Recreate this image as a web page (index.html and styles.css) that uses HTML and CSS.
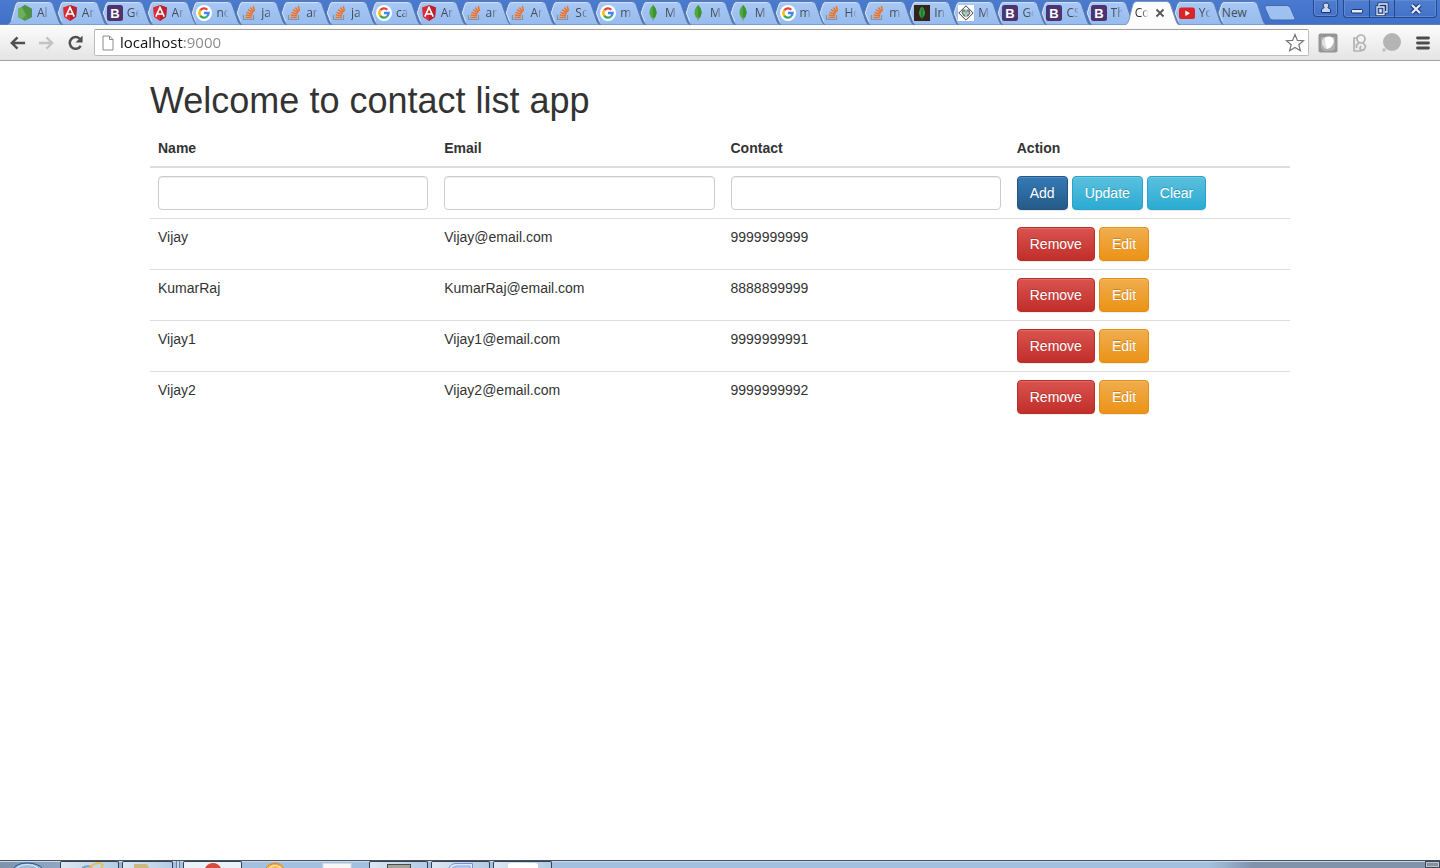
FILE: index.html
```html
<!DOCTYPE html>
<html lang="en">
<head>
<meta charset="utf-8">
<title>Contact List App</title>
<link rel="stylesheet" href="styles.css">
</head>
<body>
<svg class="defs" aria-hidden="true">
  <defs>
    <linearGradient id="tab-fill" x1="0" y1="0" x2="0" y2="1"><stop offset="0" stop-color="#a9c8f5"/><stop offset="1" stop-color="#96bbee"/></linearGradient>
    <linearGradient id="orange-fill" x1="0" y1="0" x2="0" y2="1"><stop offset="0" stop-color="#f0a030"/><stop offset="1" stop-color="#f8c860"/></linearGradient>
    <symbol id="shape-first" viewBox="0 0 56 25" preserveAspectRatio="none"><path d="M0 24.500Q3 24 4 20L8 5Q9 1.500 12 1.500H43Q46 1.500 47 4.500L52.500 20Q54 24.500 56 24.500" fill="url(#tab-fill)" stroke="#5878a8"/><path d="M5 20L9 5.500Q10 2.500 12 2.500H43" fill="none" stroke="#cfe1fa"/></symbol>
    <symbol id="shape-mid" viewBox="0 0 56 25" preserveAspectRatio="none"><path d="M11 24.500Q9 24 8 20L5.500 13L8 5Q9 1.500 12 1.500H43Q46 1.500 47 4.500L52.500 20Q54 24.500 56 24.500" fill="url(#tab-fill)" stroke="#5878a8"/><path d="M10 21L6.500 13L9 5.500Q10 2.500 12 2.500H43" fill="none" stroke="#cfe1fa"/></symbol>
    <symbol id="shape-active" viewBox="0 0 56 25" preserveAspectRatio="none"><path d="M0 25Q3 24 4 20L8 5Q9 1.500 12 1.500H43Q46 1.500 47 4.500L52.500 20Q54 24.500 56 25" fill="#fcfcfc" stroke="#7f92b4"/></symbol>

    <symbol id="i-node" viewBox="0 0 16 16"><path d="M8 0L15 4V12L8 16L1 12V4Z" fill="#58984a"/><path d="M8 0L15 4L5 14L1 12V4Z" fill="#6bb05c"/><path d="M8 0L15 4V12L11 14L5 2Z" fill="#4f9146"/></symbol>
    <symbol id="i-angular" viewBox="0 0 16 16"><path d="M8 0L15 2.500L14 12L8 16L2 12L1 2.500Z" fill="#dd2b35"/><path d="M8 0L15 2.500L14 12L8 16Z" fill="#b8252f"/><path d="M3.800 11.700L8 2.500L12.200 11.700M5.500 9H10.500" fill="none" stroke="#fff" stroke-width="1.600"/></symbol>
    <symbol id="i-boot" viewBox="0 0 16 16"><rect width="16" height="16" rx="2.500" fill="#4d3470"/><text x="8" y="12.500" text-anchor="middle" class="boot-letter">B</text></symbol>
    <symbol id="i-google" viewBox="0 0 16 16"><circle cx="8" cy="8" r="8" fill="#fff"/><g fill="none" stroke-width="2.300"><path d="M4.200 5.400A4.600 4.600 0 0 1 11.300 4.700" stroke="#ea4335"/><path d="M4.200 10.600A4.600 4.600 0 0 1 4.200 5.400" stroke="#fbbc05"/><path d="M11 11.500A4.600 4.600 0 0 1 4.200 10.600" stroke="#34a853"/><path d="M8 8H12.600A4.600 4.600 0 0 1 11 11.500" stroke="#4285f4"/></g></symbol>
    <symbol id="i-stack" viewBox="0 0 16 16"><path d="M2.500 10V14.500H12.500V10" fill="none" stroke="#8e9197" stroke-width="1.200"/><path d="M4.500 12.500H10.800M4.700 10.100L10.900 10.800M5.400 7.400L11.300 9.200M7 4.700L12 8M9.400 2.500L12.600 7M12.300 1L13.500 6.200" stroke="#ee7328" stroke-width="1.500"/></symbol>
    <symbol id="i-leaf" viewBox="0 0 16 16"><path d="M8 0Q12 4 11.500 8.500Q11 12 8 14.500Q5 12 4.500 8.500Q4 4 8 0Z" fill="#4fa83e"/><path d="M8 0Q12 4 11.500 8.500Q11 12 8 14.500Z" fill="#3d9330"/><path d="M8 12V16" stroke="#8d9d80"/></symbol>
    <symbol id="i-leaf-dark" viewBox="0 0 16 16"><rect width="16" height="16" fill="#33231a"/><path d="M8 1.500Q11.500 5 11 9Q10 12 8 13.500Q5.500 12 5 9Q4.500 5 8 1.500Z" fill="#2f9a3d"/><path d="M8 4V15" stroke="#165d22"/></symbol>
    <symbol id="i-diamond" viewBox="0 0 16 16"><rect width="16" height="16" fill="#fff"/><path d="M8 .8L15.200 8L8 15.200L.8 8Z" fill="#f4f4f2" stroke="#444"/><path d="M5 5H11L12 8L10 11H6L4 8Z" fill="#7ea492" stroke="#445" stroke-width=".7"/><path d="M5.500 8H7.500M8.500 8H10.500M8 4V6M7 10H9" stroke="#fff"/></symbol>
    <symbol id="i-youtube" viewBox="0 0 16 16"><rect y="2.500" width="16" height="11.500" rx="2.500" fill="#d9242a"/><path d="M6.300 5.500V11L11 8.200Z" fill="#fff"/></symbol>
  </defs>
</svg>

<header class="browser">
  <div class="titlebar">
    <nav class="tabs" aria-label="Open tabs">
      <a class="tab" href="#"><svg class="shape"><use href="#shape-first"/></svg><svg class="favicon"><use href="#i-node"/></svg><span class="label">Al</span></a>
      <a class="tab" href="#"><svg class="shape"><use href="#shape-mid"/></svg><svg class="favicon"><use href="#i-angular"/></svg><span class="label">An</span></a>
      <a class="tab" href="#"><svg class="shape"><use href="#shape-mid"/></svg><svg class="favicon"><use href="#i-boot"/></svg><span class="label">Ge</span></a>
      <a class="tab" href="#"><svg class="shape"><use href="#shape-mid"/></svg><svg class="favicon"><use href="#i-angular"/></svg><span class="label">An</span></a>
      <a class="tab" href="#"><svg class="shape"><use href="#shape-mid"/></svg><svg class="favicon"><use href="#i-google"/></svg><span class="label">no</span></a>
      <a class="tab" href="#"><svg class="shape"><use href="#shape-mid"/></svg><svg class="favicon"><use href="#i-stack"/></svg><span class="label">ja</span></a>
      <a class="tab" href="#"><svg class="shape"><use href="#shape-mid"/></svg><svg class="favicon"><use href="#i-stack"/></svg><span class="label">ar</span></a>
      <a class="tab" href="#"><svg class="shape"><use href="#shape-mid"/></svg><svg class="favicon"><use href="#i-stack"/></svg><span class="label">ja</span></a>
      <a class="tab" href="#"><svg class="shape"><use href="#shape-mid"/></svg><svg class="favicon"><use href="#i-google"/></svg><span class="label">ca</span></a>
      <a class="tab" href="#"><svg class="shape"><use href="#shape-mid"/></svg><svg class="favicon"><use href="#i-angular"/></svg><span class="label">An</span></a>
      <a class="tab" href="#"><svg class="shape"><use href="#shape-mid"/></svg><svg class="favicon"><use href="#i-stack"/></svg><span class="label">ar</span></a>
      <a class="tab" href="#"><svg class="shape"><use href="#shape-mid"/></svg><svg class="favicon"><use href="#i-stack"/></svg><span class="label">An</span></a>
      <a class="tab" href="#"><svg class="shape"><use href="#shape-mid"/></svg><svg class="favicon"><use href="#i-stack"/></svg><span class="label">Sc</span></a>
      <a class="tab" href="#"><svg class="shape"><use href="#shape-mid"/></svg><svg class="favicon"><use href="#i-google"/></svg><span class="label">m</span></a>
      <a class="tab" href="#"><svg class="shape"><use href="#shape-mid"/></svg><svg class="favicon"><use href="#i-leaf"/></svg><span class="label">M</span></a>
      <a class="tab" href="#"><svg class="shape"><use href="#shape-mid"/></svg><svg class="favicon"><use href="#i-leaf"/></svg><span class="label">M</span></a>
      <a class="tab" href="#"><svg class="shape"><use href="#shape-mid"/></svg><svg class="favicon"><use href="#i-leaf"/></svg><span class="label">M</span></a>
      <a class="tab" href="#"><svg class="shape"><use href="#shape-mid"/></svg><svg class="favicon"><use href="#i-google"/></svg><span class="label">m</span></a>
      <a class="tab" href="#"><svg class="shape"><use href="#shape-mid"/></svg><svg class="favicon"><use href="#i-stack"/></svg><span class="label">Ho</span></a>
      <a class="tab" href="#"><svg class="shape"><use href="#shape-mid"/></svg><svg class="favicon"><use href="#i-stack"/></svg><span class="label">m</span></a>
      <a class="tab" href="#"><svg class="shape"><use href="#shape-mid"/></svg><svg class="favicon"><use href="#i-leaf-dark"/></svg><span class="label">In</span></a>
      <a class="tab" href="#"><svg class="shape"><use href="#shape-mid"/></svg><svg class="favicon"><use href="#i-diamond"/></svg><span class="label">M</span></a>
      <a class="tab" href="#"><svg class="shape"><use href="#shape-mid"/></svg><svg class="favicon"><use href="#i-boot"/></svg><span class="label">Ge</span></a>
      <a class="tab" href="#"><svg class="shape"><use href="#shape-mid"/></svg><svg class="favicon"><use href="#i-boot"/></svg><span class="label">CS</span></a>
      <a class="tab" href="#"><svg class="shape"><use href="#shape-mid"/></svg><svg class="favicon"><use href="#i-boot"/></svg><span class="label">Th</span></a>
      <div class="tab active"><svg class="shape"><use href="#shape-active"/></svg><a class="label" href="#" aria-current="page">Co</a><button class="tab-close" aria-label="Close tab"><svg viewBox="0 0 10 10"><path d="M1.500 1.500L8.500 8.500M8.500 1.500L1.500 8.500" stroke="#555" stroke-width="1.800"/></svg></button></div>
      <a class="tab" href="#"><svg class="shape"><use href="#shape-mid"/></svg><svg class="favicon"><use href="#i-youtube"/></svg><span class="label">Yo</span></a>
      <a class="tab plain" href="#"><svg class="shape"><use href="#shape-mid"/></svg><span class="label">New</span></a>
    </nav>
    <button class="new-tab" aria-label="New tab"><svg viewBox="0 0 32 16"><path d="M3 .5H23Q25.500 .5 26.500 3L31 13.500Q31 15 29 15H9Q6.500 15 5.500 13L1 3Q.5 .5 3 .5Z" fill="#9fc1f2" stroke="#4167ac"/></svg></button>
    <div class="window-controls">
      <button class="ctl user" aria-label="Profile"><svg viewBox="0 0 24 16"><path d="M12 3A2.500 2.500 0 0 1 13.800 7.500L16.500 9.500V12.500H7.500V9.500L10.200 7.500A2.500 2.500 0 0 1 12 3Z" fill="#c9d6ee" stroke="#16356f"/></svg></button>
      <div class="ctl-group">
        <button class="ctl" aria-label="Minimize"><svg viewBox="0 0 24 16"><rect x="6.500" y="8.500" width="11" height="3.500" rx="1" fill="#e8edf6" stroke="#16356f"/></svg></button>
        <button class="ctl" aria-label="Restore"><svg viewBox="0 0 24 16"><path d="M9 5V3H17V11H15M7 6H14V13.500H7Z" fill="none" stroke="#16356f" stroke-width="3"/><path d="M9 5V3H17V11H15M7 6H14V13.500H7ZM10 9V10.500H11V9Z" fill="none" stroke="#e8edf6" stroke-width="1.300"/></svg></button>
        <button class="ctl close" aria-label="Close"><svg viewBox="0 0 24 16"><path d="M8 4L16 12M16 4L8 12" stroke="#16356f" stroke-width="4.500"/><path d="M8 4L16 12M16 4L8 12" stroke="#e8edf6" stroke-width="2.300"/></svg></button>
      </div>
    </div>
  </div>

  <div class="toolbar">
    <button class="tool" aria-label="Back"><svg viewBox="0 0 18 16"><path d="M9 2L3 8L9 14M3 8H17" fill="none" stroke="#505050" stroke-width="2.600"/></svg></button>
    <button class="tool" aria-label="Forward"><svg viewBox="0 0 18 16"><path d="M9 2L15 8L9 14M15 8H1" fill="none" stroke="#c3c3c3" stroke-width="2.400"/></svg></button>
    <button class="tool" aria-label="Reload"><svg viewBox="0 0 18 16"><path d="M14.500 11A6.200 6.200 0 1 1 13.500 3.500" fill="none" stroke="#505050" stroke-width="2.600"/><path d="M16.500 0V7.500H9Z" fill="#505050"/></svg></button>
    <div class="omnibox">
      <svg class="page-icon" viewBox="0 0 12 16"><path d="M1 1H7.500L11 4.500V15H1Z" fill="#fff" stroke="#8c8c8c"/><path d="M7.500 1V4.500H11" fill="none" stroke="#8c8c8c"/></svg>
      <input class="url" type="text" value="localhost:9000" aria-label="Address">
      <button class="star" aria-label="Bookmark"><svg viewBox="0 0 20 20"><path d="M10 1.500L12.400 7.400L18.500 7.700L13.800 11.700L15.400 17.800L10 14.400L4.600 17.800L6.200 11.700L1.500 7.700L7.600 7.400Z" fill="#fff" stroke="#777" stroke-width="1.200"/></svg></button>
    </div>
    <button class="tool" aria-label="Shield extension"><svg viewBox="0 0 20 20"><rect x=".5" y=".5" width="19" height="19" rx="2" fill="#959595"/><path d="M3 4H17V16L14 18H6L3 15Z" fill="#b0b0b0"/><path d="M7 4.500Q11 2.500 15 5Q17 9 14 13Q12 16 9 16Q5 14 4 10Q4 6 7 4.500Z" fill="#fff"/><path d="M7 4.500Q7 12 9 16Q5 14 4 10Q4 6 7 4.500Z" fill="#dedede"/></svg></button>
    <button class="tool" aria-label="Contacts extension"><svg viewBox="0 0 20 20"><g fill="none" stroke="#b2b2b2" stroke-width="1.700"><path d="M7 5H4V11M4 11V18H12"/><circle cx="11" cy="6" r="4"/><path d="M9 10L6.500 12V15M13 10L15.500 13Q15 18 11 17Q9 16 11 13"/></g></svg></button>
    <button class="tool" aria-label="Circle extension"><svg viewBox="0 0 20 20"><circle cx="10" cy="9" r="9" fill="#b4b4b4"/><circle cx="2" cy="17" r="1.800" fill="#c0c0c0"/></svg></button>
    <button class="tool menu" aria-label="Menu"><svg viewBox="0 0 14 14"><path d="M1.500 2H12.500M1.500 7H12.500M1.500 12H12.500" stroke="#4c4c4c" stroke-width="2.800" stroke-linecap="round"/></svg></button>
  </div>
</header>

<main class="page">
  <div class="container">
    <h1>Welcome to contact list app</h1>
    <table class="contacts">
      <colgroup><col class="field"><col class="field"><col class="field"><col></colgroup>
      <thead>
        <tr><th id="h-name">Name</th><th id="h-email">Email</th><th id="h-contact">Contact</th><th>Action</th></tr>
      </thead>
      <tbody>
        <tr>
          <td><input class="form-control" type="text" aria-labelledby="h-name"></td>
          <td><input class="form-control" type="text" aria-labelledby="h-email"></td>
          <td><input class="form-control" type="text" aria-labelledby="h-contact"></td>
          <td><div class="actions"><button class="btn primary">Add</button><button class="btn info">Update</button><button class="btn info">Clear</button></div></td>
        </tr>
        <tr><td>Vijay</td><td>Vijay@email.com</td><td>9999999999</td><td><div class="actions"><button class="btn danger">Remove</button><button class="btn warning">Edit</button></div></td></tr>
        <tr><td>KumarRaj</td><td>KumarRaj@email.com</td><td>8888899999</td><td><div class="actions"><button class="btn danger">Remove</button><button class="btn warning">Edit</button></div></td></tr>
        <tr><td>Vijay1</td><td>Vijay1@email.com</td><td>9999999991</td><td><div class="actions"><button class="btn danger">Remove</button><button class="btn warning">Edit</button></div></td></tr>
        <tr><td>Vijay2</td><td>Vijay2@email.com</td><td>9999999992</td><td><div class="actions"><button class="btn danger">Remove</button><button class="btn warning">Edit</button></div></td></tr>
      </tbody>
    </table>
  </div>
</main>

<footer class="taskbar">
  <button class="start" aria-label="Start"><svg viewBox="0 0 30 6"><path d="M0 7Q4 1 14 1Q25 1 30 7Z" fill="#9dbbd8" stroke="#1f5188"/><path d="M4 6Q8 2.500 14 2.500Q21 2.500 25 6" fill="none" stroke="#dcebf6"/></svg></button>
  <button class="task open" aria-label="Internet Explorer"><svg viewBox="0 0 30 6"><path d="M7 6Q12 3 17 5" stroke="#7f9fc4" stroke-width="2" fill="none"/><path d="M14 6Q22 -1 27 2Q29 3 26 6" stroke="#edbd3e" stroke-width="1.600" fill="none"/></svg></button>
  <button class="task open short" aria-label="File Explorer"><svg viewBox="0 0 30 6"><path d="M1 6V2H14L16 6Z" fill="#ccb980"/></svg></button>
  <span class="divider"></span>
  <button class="task open current" aria-label="Chrome"><svg viewBox="0 0 30 6"><path d="M7 6Q10 1 15 1Q20 1 23 6Z" fill="#d94b3a"/></svg></button>
  <button class="task" aria-label="Media player"><svg viewBox="0 0 30 6"><path d="M5 7Q9 1 15 1Q21 1 25 7Z" fill="url(#orange-fill)" stroke="#d98a20"/><path d="M9 6Q15 1 21 6" fill="none" stroke="#fff2cf"/></svg></button>
  <button class="task" aria-label="Document"><svg viewBox="0 0 30 6"><rect x="1" y="1.500" width="28" height="8" fill="#f7f7f7" stroke="#d8dde4"/></svg></button>
  <button class="task open" aria-label="Terminal"><svg viewBox="0 0 30 6"><rect x="3.500" y="2.500" width="23" height="8" fill="#a3a59c" stroke="#4c4d49"/></svg></button>
  <button class="task open" aria-label="Word"><svg viewBox="0 0 30 6"><path d="M3 6Q5 1.500 10 1.500H26.500V8" fill="#dfe9fb" stroke="#7891d5"/><path d="M6 6Q8 4 12 4H24V6" fill="#b8ccf0" stroke="#8ea5df"/></svg></button>
  <button class="task open" aria-label="Paint"><svg viewBox="0 0 30 6"><rect y="1" width="30" height="9" rx="3" fill="#fff"/></svg></button>
  <span class="tray"></span>
  <button class="show-desktop" aria-label="Show desktop"></button>
</footer>
</body>
</html>
```

FILE: styles.css
```css
* { box-sizing: border-box; }

body {
  margin: 0;
  min-height: 100vh;
  display: flex;
  flex-direction: column;
  background: #fff;
  color: #333;
  font: 14px/20px "Liberation Sans", Arial, sans-serif;
}

button {
  margin: 0;
  padding: 0;
  border: 0;
  background: none;
  font: inherit;
  cursor: pointer;
}

svg { display: block; }
a { color: inherit; text-decoration: none; }
.defs { position: absolute; width: 0; height: 0; }
.boot-letter { fill: #fff; font: bold 13px "Liberation Sans", Arial, sans-serif; }

/* Tab strip */
.titlebar {
  display: flex;
  align-items: flex-start;
  height: 25px;
  padding: 0 3px 0 7px;
  background: linear-gradient(#4a7bcf, #4170c9);
  border-bottom: 1px solid #6280b2;
}

.tabs { flex: 1; display: flex; min-width: 0; }

.tab {
  position: relative;
  flex: 45 1 0;
  min-width: 0;
  display: flex;
  align-items: center;
  gap: 4px;
  height: 25px;
  padding-left: 10px;
  color: #444c58;
  font: 12px/16px "Open Sans", "Noto Sans", sans-serif;
}

.tab:nth-child(n+21) { flex-grow: 44; }

.tab .shape {
  position: absolute;
  top: 0;
  left: 0;
  width: calc(100% + 10px);
  height: 25px;
}

.tab .favicon { position: relative; flex: none; width: 16px; height: 16px; }

.tab .label {
  position: relative;
  flex: 1;
  overflow: hidden;
  white-space: nowrap;
  -webkit-mask-image: linear-gradient(90deg, #000 40%, transparent 85%);
  mask-image: linear-gradient(90deg, #000 40%, transparent 85%);
}

.tab.active { z-index: 1; color: #333; }
.tab.plain { padding-left: 9px; }
.tab.plain .label { -webkit-mask-image: none; mask-image: none; }
.tab-close { position: relative; flex: none; width: 10px; margin-right: 4px; }
.tab-close svg { width: 10px; height: 10px; }

.new-tab { width: 32px; margin: 5px 17px 0 8px; }
.new-tab svg { width: 32px; height: 16px; }

.window-controls { display: flex; gap: 5px; }
.ctl { width: 25px; height: 17px; border-left: 1px solid #24498f; }
.ctl svg { width: 24px; height: 16px; margin: 0 auto; }
.ctl.close { width: 42px; }
.user,
.ctl-group {
  border: 1px solid #24498f;
  border-top: 0;
  border-radius: 0 0 4px 4px;
  background: linear-gradient(#4f7ed0, #4371c7);
  box-shadow: inset 0 0 0 1px #6289d2;
}
.ctl-group { display: flex; }
.ctl-group .ctl:first-child { border-left: 0; }

/* Address bar row */
.toolbar {
  display: flex;
  align-items: center;
  gap: 12px;
  height: 36px;
  padding: 0 10px 0 9px;
  background: linear-gradient(#fcfcfc, #e4e4e4);
  border-bottom: 1px solid #a2a2a2;
}

.tool { flex: none; }
.tool svg { width: 17px; height: 16px; }
.omnibox ~ .tool svg { width: 20px; height: 20px; }
.omnibox ~ .menu { margin-left: 2px; }
.omnibox ~ .menu svg { width: 14px; height: 14px; }

.omnibox {
  flex: 1;
  display: flex;
  align-items: center;
  gap: 6px;
  height: 27px;
  margin-right: -3px;
  margin-left: -2px;
  padding: 0 3px 0 7px;
  background: #fff;
  border: 1px solid #bcbcbc;
  border-top-color: #a0a0a0;
  border-radius: 2px;
}

.page-icon { width: 12px; height: 16px; }

.url {
  flex: 1;
  min-width: 0;
  padding: 0 0 2px;
  border: 0;
  outline: 0;
  font: 15px/20px "Open Sans", "Noto Sans", sans-serif;
  color: transparent;
  background: linear-gradient(90deg, #111 64px, #888 64px);
  -webkit-background-clip: text;
  background-clip: text;
}

.star svg { width: 20px; height: 20px; }

/* Page content */
.page { flex: 1; }

.container { max-width: 1170px; margin: 0 auto; padding: 0 15px; }

h1 {
  margin: 20px 0 10px;
  font-size: 36px;
  font-weight: 400;
  line-height: 40px;
}

.contacts {
  width: 100%;
  border-collapse: collapse;
  table-layout: fixed;
}

.field { width: 25.11%; }

.contacts th,
.contacts td {
  padding: 8px;
  text-align: left;
  vertical-align: top;
}

.contacts th { padding-top: 7px; border-bottom: 2px solid #ddd; }
.contacts td { border-top: 1px solid #ddd; }

.form-control {
  display: block;
  width: 100%;
  height: 34px;
  padding: 6px 12px;
  border: 1px solid #ccc;
  border-radius: 4px;
  background: #fff;
  font: inherit;
  box-shadow: inset 0 1px 1px rgba(0, 0, 0, .075);
}

.actions { display: flex; gap: 4px; }

.btn {
  height: 34px;
  padding: 6px 12px;
  border: 1px solid;
  border-radius: 4px;
  color: #fff;
  white-space: nowrap;
  text-shadow: 0 -1px 0 rgba(0, 0, 0, .2);
  box-shadow: inset 0 1px 0 rgba(255, 255, 255, .15), 0 1px 1px rgba(0, 0, 0, .075);
}

.primary { background: linear-gradient(#337ab7, #265a88); border-color: #245580; }
.info { background: linear-gradient(#5bc0de, #2aabd2); border-color: #28a4c9; }
.danger { background: linear-gradient(#d9534f, #c12e2a); border-color: #b92c28; }
.warning { background: linear-gradient(#f0ad4e, #eb9316); border-color: #e38d13; }

/* Taskbar edge */
.taskbar {
  display: flex;
  gap: 3px;
  height: 8px;
  overflow: hidden;
  border-top: 1px solid #465361;
  background: linear-gradient(90deg, #7f93ab 0, #8ea6c2 4%, #a3c0e0 12%, #a3c0e0 84%, #8093ab 87%);
  box-shadow: inset 0 1px 0 #c9d9ea;
}

.start { width: 57px; }
.start svg,
.task svg { width: 30px; height: 6px; margin: 1px auto 0; }
.start svg { margin-left: 13px; }
.task { width: 59px; border-radius: 2px 2px 0 0; }
.task.open {
  border: 1px solid #35424f;
  border-bottom: 0;
  background: linear-gradient(90deg, #dce7f1, #b4cce5);
}
.task.open svg { margin-top: 0; }
.task.short { width: 51px; }
.task.current { background: #eaf1f8; }
.divider { width: 4px; border: 1px solid #6d8299; border-width: 0 1px; background: #c5d6e8; }
.tray { flex: 1; }
.show-desktop { width: 15px; border: 1px solid #3f4954; background: #85919f; box-shadow: inset 0 0 0 1px #b8c4d0; }
```
